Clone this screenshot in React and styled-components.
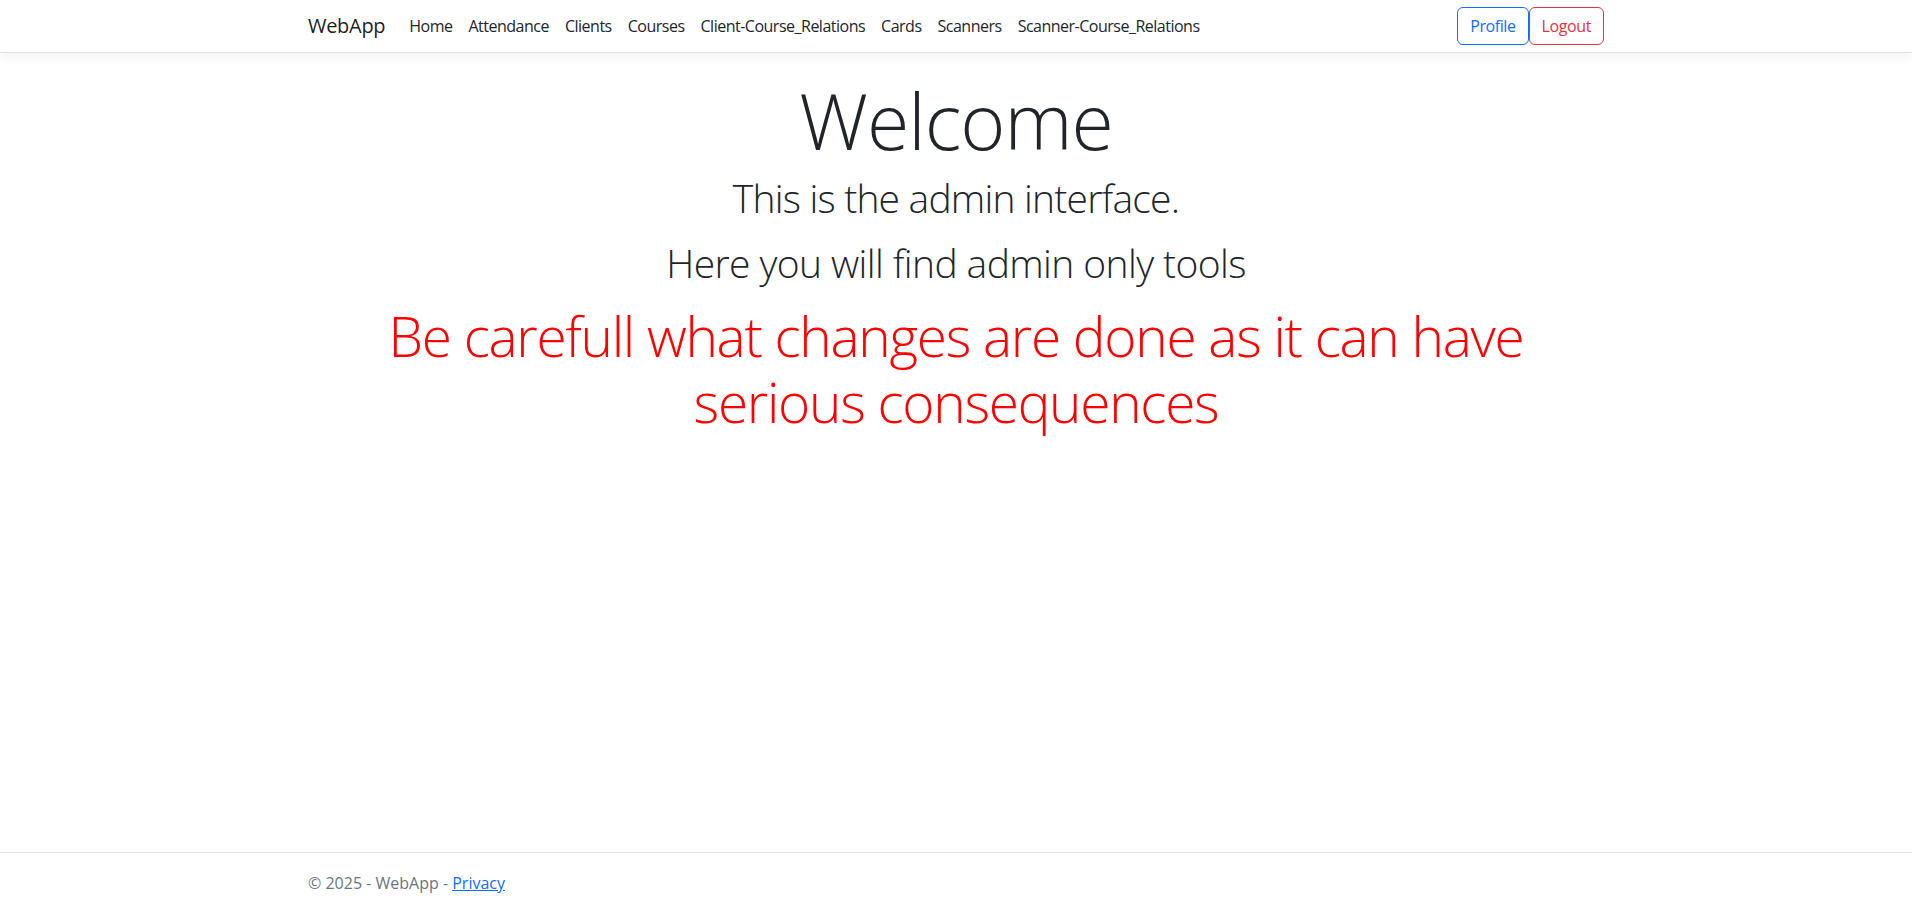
import React from "react";
import styled, { createGlobalStyle } from "styled-components";

const GlobalStyle = createGlobalStyle`
  html, body {
    margin: 0;
    padding: 0;
    background: #fff;
  }
  body {
    font-family: "Open Sans", "Noto Sans", "Liberation Sans", sans-serif;
    font-size: 16px;
    line-height: 1.5;
    color: #212529;
  }
  *, *::before, *::after { box-sizing: border-box; }
`;

const Page = styled.div`
  min-height: 100vh;
  display: flex;
  flex-direction: column;
`;

const Header = styled.header`
  background: #fff;
  border-bottom: 1px solid #dee2e6;
  box-shadow: 0 4px 12px rgba(0, 0, 0, 0.05);
  margin-bottom: 22px;
`;

const Container = styled.div`
  width: 100%;
  max-width: 1320px;
  margin: 0 auto;
  padding: 0 12px;
`;

const NavInner = styled(Container)`
  display: flex;
  align-items: center;
  height: 52px;
`;

const Brand = styled.a`
  font-size: 20px;
  color: rgba(0, 0, 0, 0.9);
  text-decoration: none;
  margin-right: 16px;
  letter-spacing: -0.3px;
`;

const NavList = styled.nav`
  display: flex;
  flex: 1;
  align-items: center;
`;

const NavLink = styled.a`
  padding: 8px;
  font-size: 16px;
  color: #212529;
  text-decoration: none;
  letter-spacing: -0.5px;
`;

const ButtonGroup = styled.div`
  display: flex;
  align-items: center;
`;

const OutlineButton = styled.button`
  font-family: inherit;
  font-size: 16px;
  line-height: 1.5;
  padding: 6px 12px;
  border-radius: 6px;
  background: transparent;
  border: 1px solid ${(p) => p.$color};
  color: ${(p) => p.$color};
  letter-spacing: -0.4px;
  cursor: pointer;
`;

const Main = styled.main`
  flex: 1;
  text-align: center;
`;

const Display = styled.h1`
  font-weight: 300;
  font-size: ${(p) => p.$size}px;
  line-height: 1.2;
  margin: 0 0 ${(p) => p.$mb ?? 8}px;
  color: ${(p) => p.$color || "#212529"};
  letter-spacing: ${(p) => p.$ls ?? 0}px;
`;

const Footer = styled.footer`
  border-top: 1px solid #dee2e6;
  color: #6c757d;
  height: 58px;
  line-height: 60px;
  white-space: nowrap;
`;

const FooterLink = styled.a`
  color: #0d6efd;
  text-decoration: underline;
`;

const links = [
  "Home",
  "Attendance",
  "Clients",
  "Courses",
  "Client-Course_Relations",
  "Cards",
  "Scanners",
  "Scanner-Course_Relations",
];

export default function App() {
  return (
    <>
      <GlobalStyle />
      <Page>
        <Header>
          <NavInner>
            <Brand href="#">WebApp</Brand>
            <NavList>
              {links.map((l) => (
                <NavLink key={l} href="#">
                  {l}
                </NavLink>
              ))}
            </NavList>
            <ButtonGroup>
              <OutlineButton $color="#0d6efd">Profile</OutlineButton>
              <OutlineButton $color="#dc3545">Logout</OutlineButton>
            </ButtonGroup>
          </NavInner>
        </Header>
        <Main>
          <Container>
            <Display $size={77} $ls={-1}>Welcome</Display>
            <Display as="p" $size={39} $ls={-0.8} $mb={18}>This is the admin interface.</Display>
            <Display as="p" $size={39} $ls={-0.6} $mb={16}>Here you will find admin only tools</Display>
            <Display as="p" $size={55} $color="#ff0000" $ls={-1.3}>
              Be carefull what changes are done as it can have serious consequences
            </Display>
          </Container>
        </Main>
        <Footer>
          <Container>
            &copy; 2025 - WebApp - <FooterLink href="#">Privacy</FooterLink>
          </Container>
        </Footer>
      </Page>
    </>
  );
}
